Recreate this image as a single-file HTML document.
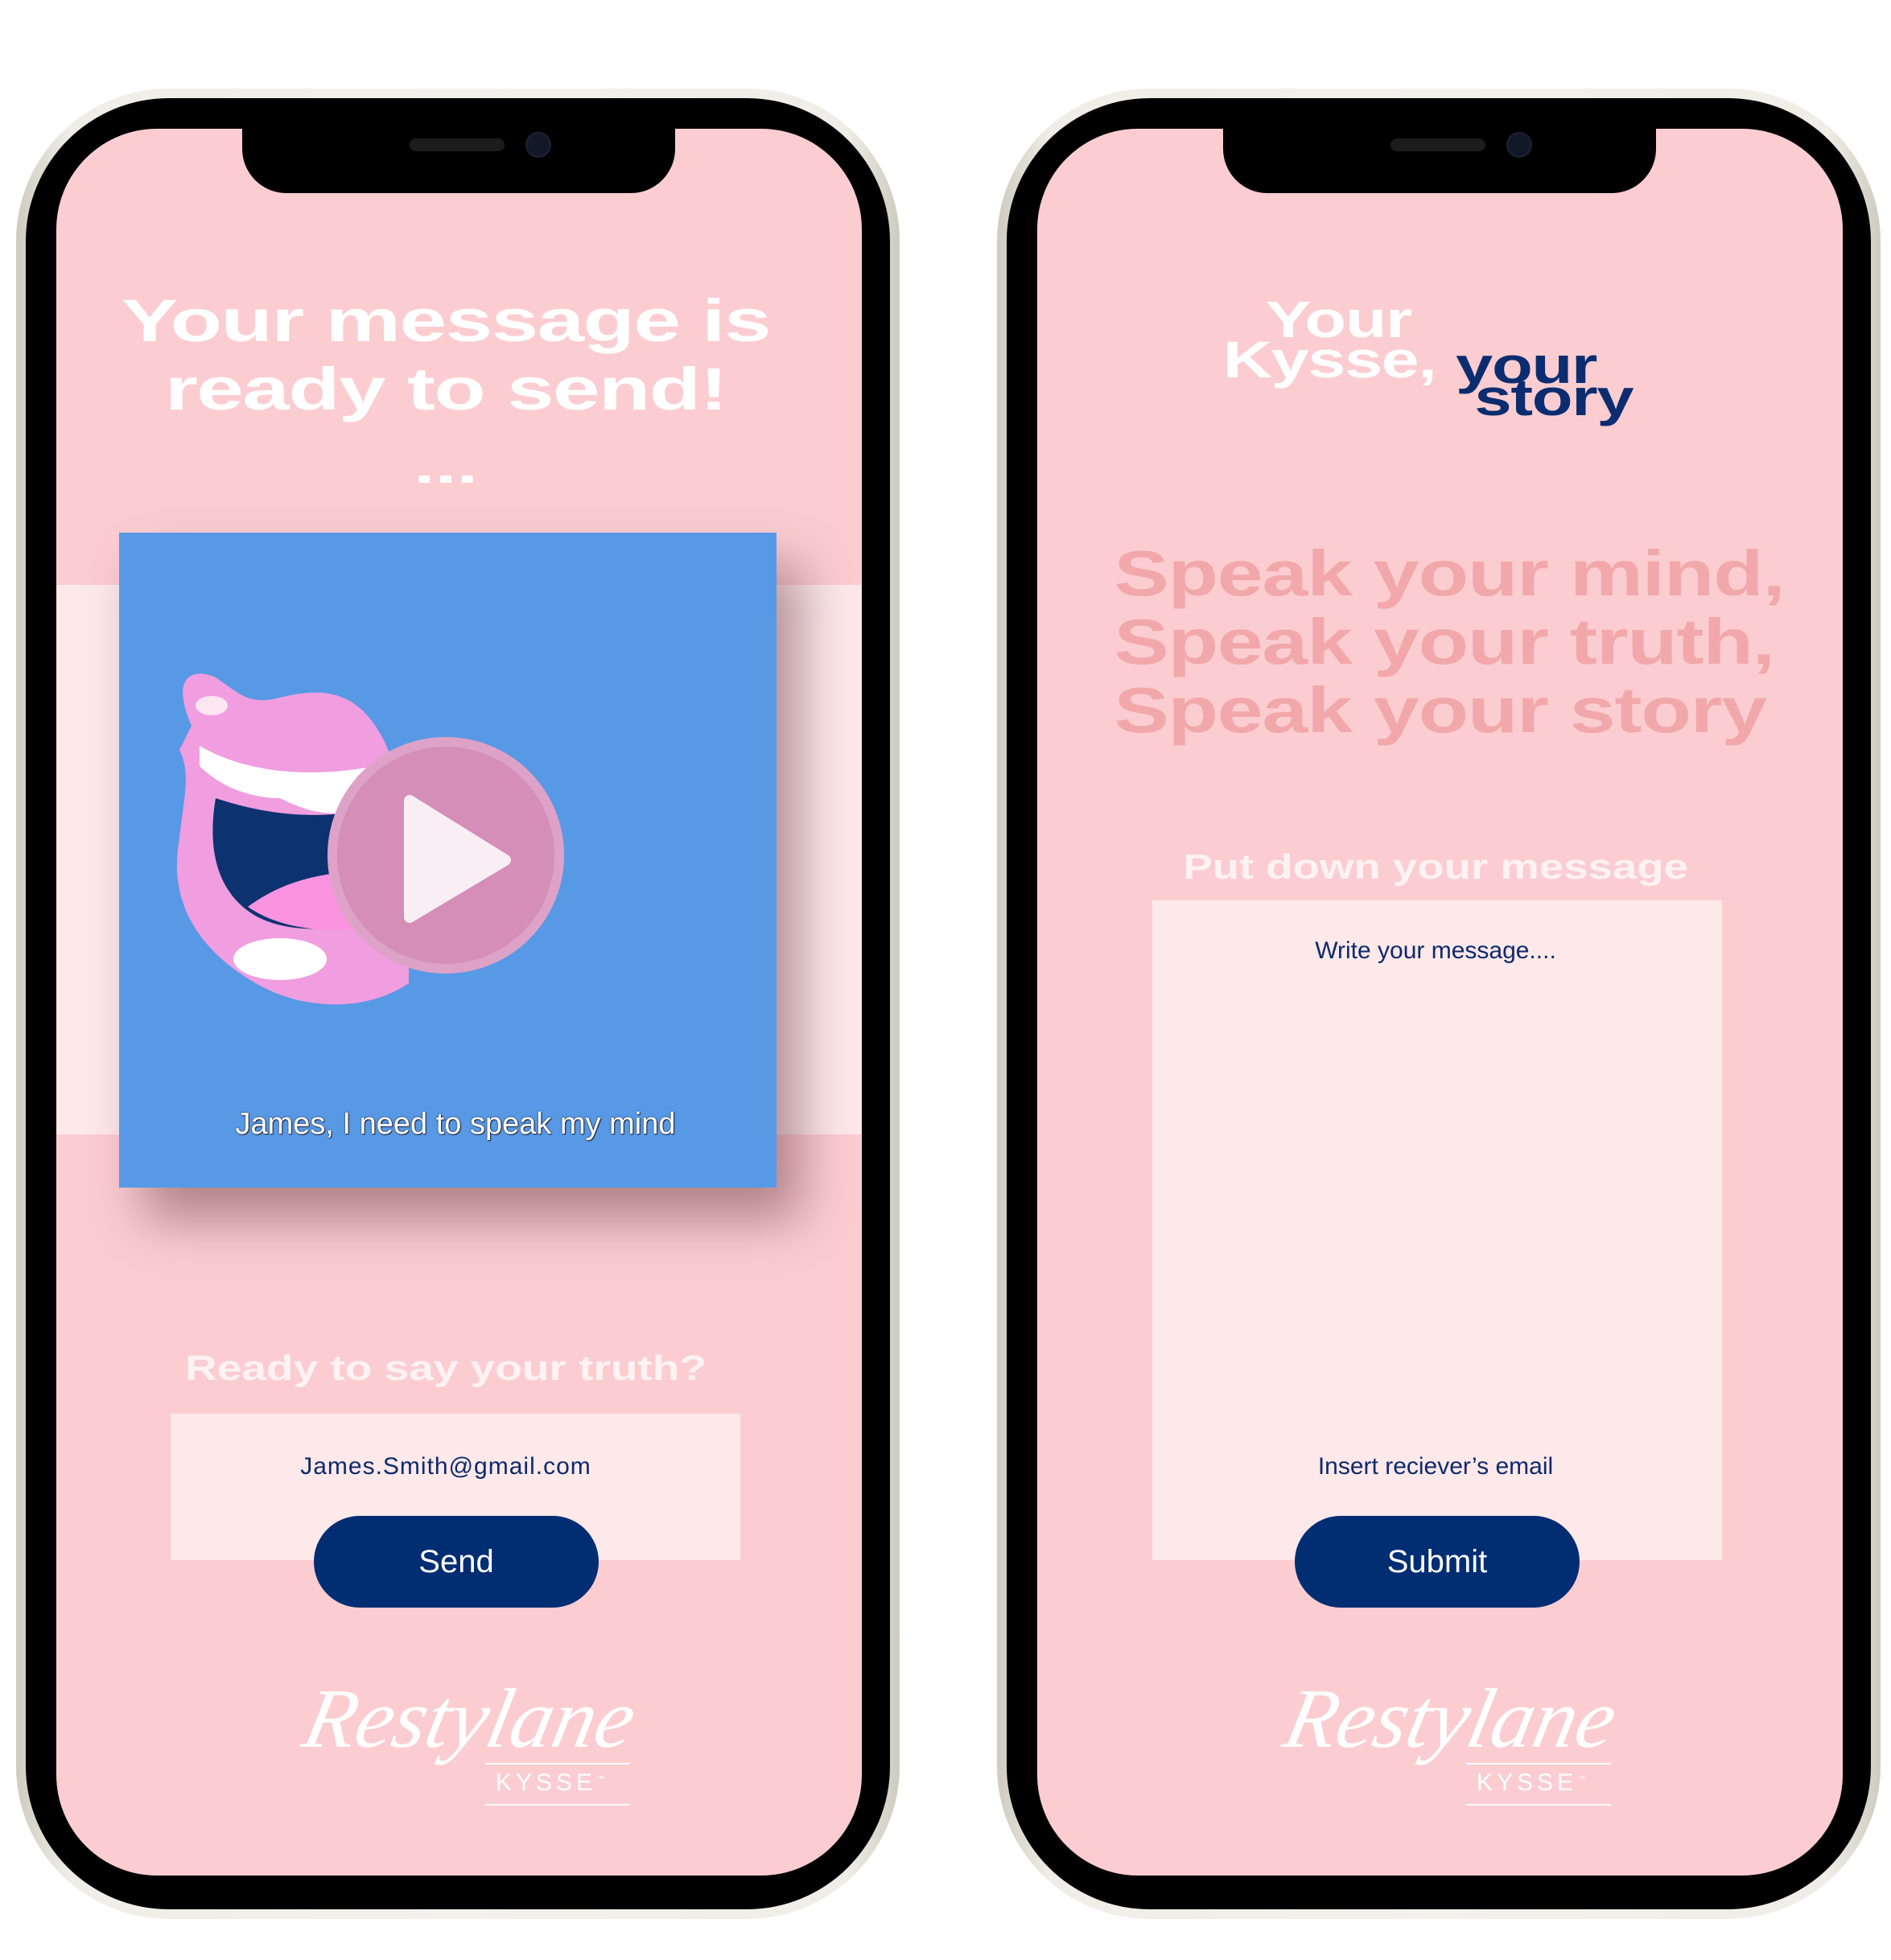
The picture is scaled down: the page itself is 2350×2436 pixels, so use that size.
<!DOCTYPE html>
<html><head><meta charset="utf-8"><style>
*{margin:0;padding:0;box-sizing:border-box}
body{width:2350px;height:2436px;background:#fff;position:relative;overflow:hidden;font-family:"Liberation Sans",sans-serif}
.ph{position:absolute;top:0;width:1175px;height:2436px}
.frame{position:absolute;left:20px;top:110px;width:1098px;height:2275px;border-radius:190px;background:linear-gradient(90deg,#cfcbc0,#efede6 6%,#f3f1ec 50%,#efede6 94%,#cfcbc0)}
.bez{position:absolute;left:32px;top:122px;width:1074px;height:2251px;border-radius:178px;background:#000}
.scr{position:absolute;left:70px;top:160px;width:1001px;height:2171px;border-radius:125px;background:#fbcdd1;overflow:hidden}
.notch{position:absolute;left:231px;top:-10px;width:538px;height:90px;background:#000;border-radius:0 0 55px 55px}
.spk{position:absolute;left:208px;top:22px;width:118px;height:16px;border-radius:8px;background:#1c1c1c}
.cam{position:absolute;left:352px;top:14px;width:32px;height:32px;border-radius:50%;background:#111827;box-shadow:inset 0 0 4px #334}
.t{position:absolute;white-space:nowrap;transform:translateX(-50%);transform-origin:center}
.btn{position:absolute;top:1724px;width:354px;height:114px;border-radius:57px;background:#012d73;color:#fff;font-size:40px;text-align:center;line-height:114px}
.logo{position:absolute;left:300px;top:1905px;width:420px;height:190px}
</style></head><body>

<!-- LEFT PHONE -->
<div class="ph" style="left:0">
<div class="frame"></div><div class="bez"></div>
<div class="scr">
 <div style="position:absolute;left:0;top:567px;width:1001px;height:683px;background:#fde8ea"></div>
 <div class="notch"><div class="spk"></div><div class="cam"></div></div>
 <div class="t" style="left:484px;top:196px;font-size:74px;font-weight:bold;color:#fff;transform:translateX(-50%) scaleX(1.42);line-height:85px;text-align:center;letter-spacing:-1px">Your message is<br>ready to send!</div>
 <div class="t" style="left:484px;top:385px;font-size:60px;font-weight:bold;color:#fff;transform:translateX(-50%) scaleX(1.6)">...</div>
 <div style="position:absolute;left:78px;top:502px;width:817px;height:814px;background:#5899e5;box-shadow:30px 40px 60px rgba(90,40,50,.45)">
  <svg width="817" height="814" style="position:absolute;left:0;top:0">
   <path d="M90 240 C 60 170,100 170,120 180 C150 200,160 215,200 205 C260 190,300 200,330 260 L 360 330 L 360 560 C 300 600,220 590,170 560 C 100 520,60 460,75 380 C 80 330,90 300,75 270 Z" fill="#f09ee0"/>
   <path d="M100 265 C 160 300,240 305,320 290 L 330 330 C 280 360,240 350,200 330 C 170 330,130 320,100 290 Z" fill="#fff"/>
   <path d="M120 330 C 180 350,250 360,330 340 L 340 470 C 280 500,200 500,160 470 C 120 440,110 390,120 330 Z" fill="#0c3270"/>
   <path d="M160 465 C 220 420,290 420,340 420 L 345 480 C 290 500,210 500,160 465 Z" fill="#fa93e0"/>
   <ellipse cx="200" cy="530" rx="58" ry="26" fill="#fff"/>
   <ellipse cx="115" cy="215" rx="20" ry="12" fill="#fde6f0"/>
  </svg>
  <div style="position:absolute;left:259px;top:254px;width:294px;height:294px;border-radius:50%;background:#d48eb8;border:12px solid #dea2c8"></div>
  <svg width="817" height="814" style="position:absolute;left:0;top:0"><path d="M361 333 L361 478 L480 407 Z" fill="#f8eef4" stroke="#f8eef4" stroke-width="14" stroke-linejoin="round"/></svg>
  <div class="t" style="left:418px;top:714px;font-size:38px;color:#fff;text-shadow:0 0 2px #223,1px 1px 1px #223">James, I need to speak my mind</div>
 </div>
 <div class="t" style="left:484px;top:1516px;font-size:44px;font-weight:bold;color:#fef2f3;transform:translateX(-50%) scaleX(1.25)">Ready to say your truth?</div>
 <div style="position:absolute;left:142px;top:1597px;width:708px;height:182px;background:#fde8ea"></div>
 <div class="t" style="left:484px;top:1646px;font-size:30px;color:#0c2a6b;letter-spacing:1px">James.Smith@gmail.com</div>
 <div class="btn" style="left:320px">Send</div>
 <div class="logo">
  <div style="position:absolute;left:10px;top:10px;font-family:'Liberation Serif',serif;font-style:italic;font-size:105px;color:#fff;transform:skewX(-12deg)">Restylane</div>
  <div style="position:absolute;left:233px;top:126px;width:180px;border-top:2px solid #fff"></div>
  <div style="position:absolute;left:246px;top:134px;font-size:30px;color:#fff;letter-spacing:5px;font-weight:300">KYSSE<sup style="font-size:10px">™</sup></div>
  <div style="position:absolute;left:233px;top:177px;width:180px;border-top:2px solid #fff"></div>
 </div>
</div>
</div>

<!-- RIGHT PHONE -->
<div class="ph" style="left:1219px">
<div class="frame"></div><div class="bez"></div>
<div class="scr">
 <div class="notch"><div class="spk"></div><div class="cam"></div></div>
 <div style="position:absolute;left:231px;top:212px;font-size:64px;font-weight:bold;color:#fff;line-height:50px;transform:scaleX(1.32);transform-origin:left top;letter-spacing:-1px">
  <div style="margin-left:40px">Your</div><div>Kysse,</div></div>
 <div style="position:absolute;left:520px;top:274px;font-size:64px;font-weight:bold;color:#0b2d70;line-height:40px;transform:scaleX(1.3);transform-origin:left top;letter-spacing:-1px">
  <div>your</div><div style="margin-left:18px">story</div></div>
 <div class="t" style="left:512px;top:510px;font-size:80px;font-weight:bold;color:#f2a8ab;line-height:85px;transform:translateX(-50%) scaleX(1.28);letter-spacing:-1px">Speak your mind,<br>Speak your truth,<br>Speak your story</div>
 <div class="t" style="left:495px;top:893px;font-size:44px;font-weight:bold;color:#fef2f3;transform:translateX(-50%) scaleX(1.24)">Put down your message</div>
 <div style="position:absolute;left:143px;top:959px;width:708px;height:820px;background:#fde8ea"></div>
 <div class="t" style="left:495px;top:1005px;font-size:30px;color:#0c2a6b">Write your message....</div>
 <div class="t" style="left:495px;top:1646px;font-size:30px;color:#0c2a6b">Insert reciever’s email</div>
 <div class="btn" style="left:320px">Submit</div>
 <div class="logo">
  <div style="position:absolute;left:10px;top:10px;font-family:'Liberation Serif',serif;font-style:italic;font-size:105px;color:#fff;transform:skewX(-12deg)">Restylane</div>
  <div style="position:absolute;left:233px;top:126px;width:180px;border-top:2px solid #fff"></div>
  <div style="position:absolute;left:246px;top:134px;font-size:30px;color:#fff;letter-spacing:5px;font-weight:300">KYSSE<sup style="font-size:10px">™</sup></div>
  <div style="position:absolute;left:233px;top:177px;width:180px;border-top:2px solid #fff"></div>
 </div>
</div>
</div>
</body></html>
